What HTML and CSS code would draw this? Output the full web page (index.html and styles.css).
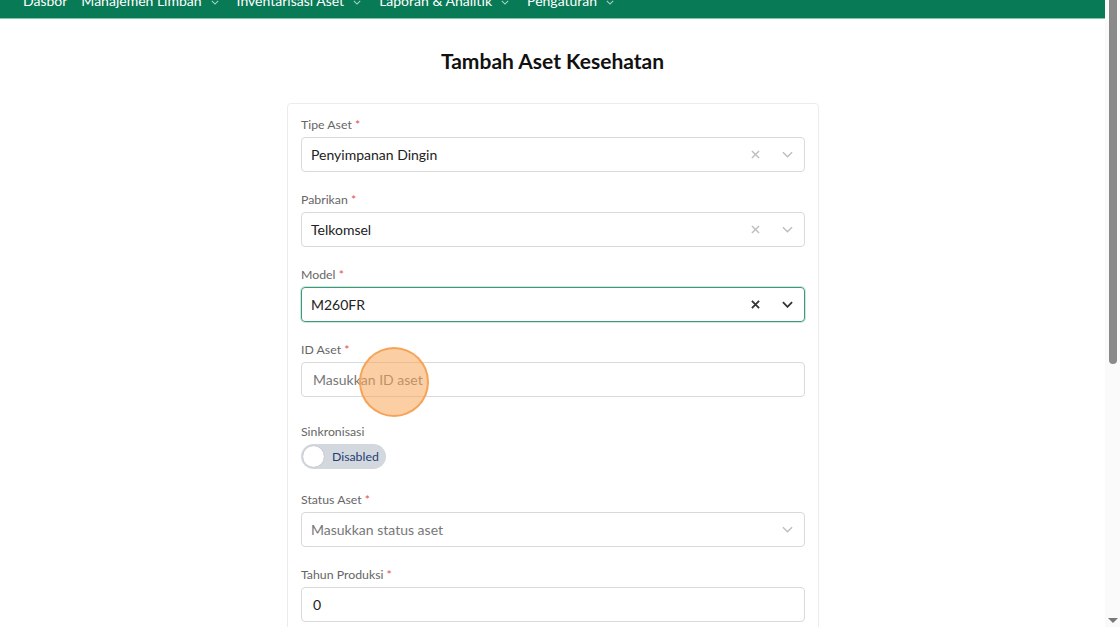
FILE: index.html
```html
<!DOCTYPE html>
<html>
<head>
    <title>Tambah Aset Kesehatan</title>
    <link rel="stylesheet" href="styles.css">
</head>
<body>
    <div class="page">
        <!-- top navigation (page is scrolled a little) -->
        <nav class="topnav">
            <span class="nav-item">Dasbor</span>
            <span class="nav-item">Manajemen Limbah <svg class="nav-caret" viewBox="0 0 10 6"><path d="M1 1l4 4 4-4" fill="none" stroke="currentColor" stroke-width="1.3"/></svg></span>
            <span class="nav-item">Inventarisasi Aset <svg class="nav-caret" viewBox="0 0 10 6"><path d="M1 1l4 4 4-4" fill="none" stroke="currentColor" stroke-width="1.3"/></svg></span>
            <span class="nav-item">Laporan &amp; Analitik <svg class="nav-caret" viewBox="0 0 10 6"><path d="M1 1l4 4 4-4" fill="none" stroke="currentColor" stroke-width="1.3"/></svg></span>
            <span class="nav-item">Pengaturan <svg class="nav-caret" viewBox="0 0 10 6"><path d="M1 1l4 4 4-4" fill="none" stroke="currentColor" stroke-width="1.3"/></svg></span>
        </nav>

        <h1 class="page-title">Tambah Aset Kesehatan</h1>

        <form class="card">
            <div class="field">
                <label class="field-label">Tipe Aset <span class="req">*</span></label>
                <div class="select">
                    <span class="select-value">Penyimpanan Dingin</span>
                    <svg class="icon-clear" viewBox="0 0 10 10"><path d="M1 1l8 8M9 1l-8 8" stroke="currentColor" stroke-width="1.5"/></svg>
                    <svg class="icon-chevron" viewBox="0 0 12 7"><path d="M1 1l5 5 5-5" fill="none" stroke="currentColor" stroke-width="1.5"/></svg>
                </div>
            </div>

            <div class="field">
                <label class="field-label">Pabrikan <span class="req">*</span></label>
                <div class="select">
                    <span class="select-value">Telkomsel</span>
                    <svg class="icon-clear" viewBox="0 0 10 10"><path d="M1 1l8 8M9 1l-8 8" stroke="currentColor" stroke-width="1.5"/></svg>
                    <svg class="icon-chevron" viewBox="0 0 12 7"><path d="M1 1l5 5 5-5" fill="none" stroke="currentColor" stroke-width="1.5"/></svg>
                </div>
            </div>

            <div class="field">
                <label class="field-label">Model <span class="req">*</span></label>
                <div class="select focused">
                    <span class="select-value">M260FR</span>
                    <svg class="icon-clear" viewBox="0 0 10 10"><path d="M1 1l8 8M9 1l-8 8" stroke="currentColor" stroke-width="2"/></svg>
                    <svg class="icon-chevron" viewBox="0 0 12 7"><path d="M1 1l5 5 5-5" fill="none" stroke="currentColor" stroke-width="2"/></svg>
                </div>
            </div>

            <div class="field">
                <label class="field-label">ID Aset <span class="req">*</span></label>
                <div class="input-wrap">
                    <input class="text-input" type="text" placeholder="Masukkan ID aset">
                    <span class="click-marker"></span>
                </div>
            </div>

            <div class="field field-toggle">
                <label class="field-label">Sinkronisasi</label>
                <div class="toggle">
                    <span class="toggle-knob"></span>
                    <span class="toggle-text">Disabled</span>
                </div>
            </div>

            <div class="field">
                <label class="field-label">Status Aset <span class="req">*</span></label>
                <div class="select">
                    <span class="select-value placeholder">Masukkan status aset</span>
                    <svg class="icon-chevron" viewBox="0 0 12 7"><path d="M1 1l5 5 5-5" fill="none" stroke="currentColor" stroke-width="1.5"/></svg>
                </div>
            </div>

            <div class="field">
                <label class="field-label">Tahun Produksi <span class="req">*</span></label>
                <input class="text-input" type="text" value="0">
            </div>
        </form>
    </div>

    <!-- fake scrollbar -->
    <div class="scrollbar">
        <div class="scroll-thumb"></div>
        <div class="scroll-arrow"></div>
    </div>
</body>
</html>
```

FILE: styles.css
```css
html, body {
    margin: 0;
    padding: 0;
    height: 100%;
    overflow: hidden;
}

body {
    font-family: Lato, "Open Sans", Arial, sans-serif;
    background-color: #fff;
    color: #222;
}

.page {
    width: 1105px;
}

.topnav {
    height: 18px;
    background-color: #087a55;
    border-bottom: 1px solid #7fc4ab;
    display: flex;
    align-items: flex-end;
    padding-left: 23px;
    overflow: hidden;
}

.nav-item {
    color: #fff;
    font-size: 14px;
    line-height: 14px;
    margin-right: 14px;
    display: flex;
    align-items: center;
    white-space: nowrap;
    margin-bottom: 10px;
}

.nav-item .nav-caret {
    margin-right: 4px;
}

.nav-caret {
    width: 8px;
    height: 5px;
    color: #a9d8c6;
    margin-left: 9px;
    margin-top: 2px;
}

.page-title {
    text-align: center;
    font-size: 21px;
    font-weight: bold;
    color: #111;
    margin: 29px 0 0;
    line-height: 26px;
}

.card {
    width: 504px;
    margin: 29px 0 0 287px;
    padding: 11px 13px 20px;
    border: 1px solid #ececec;
    border-radius: 4px;
}

.field {
    margin-bottom: 18px;
}

.field-label {
    display: block;
    font-size: 12.3px;
    line-height: 19px;
    color: #666;
    margin-bottom: 3px;
}

.req {
    color: #e0524f;
}

.select {
    height: 33px;
    border: 1px solid #d9d9d9;
    border-radius: 4px;
    display: flex;
    align-items: center;
    padding: 0 11px 0 9px;
}

.select.focused {
    border-color: #3d9a78;
    box-shadow: 0 0 0 1px #cde8dd;
}

.select-value {
    flex: 1;
    font-size: 14px;
    color: #222;
}

.select-value.placeholder {
    color: #777;
}

.icon-clear {
    width: 9px;
    height: 9px;
    color: #bdbdbd;
    margin-right: 22px;
}

.icon-chevron {
    width: 11px;
    height: 7px;
    color: #bdbdbd;
}

.focused .icon-clear,
.focused .icon-chevron {
    color: #333;
}

.input-wrap {
    position: relative;
}

.text-input {
    display: block;
    box-sizing: border-box;
    width: 100%;
    height: 35px;
    border: 1px solid #d9d9d9;
    border-radius: 4px;
    padding: 0 11px;
    font-family: inherit;
    font-size: 14px;
    color: #222;
    outline: none;
}

.text-input::placeholder {
    color: #777;
}

.click-marker {
    position: absolute;
    left: 58px;
    top: -15px;
    width: 66px;
    height: 66px;
    border-radius: 50%;
    background-color: rgba(250, 165, 90, 0.55);
    border: 2px solid rgba(245, 160, 80, 0.9);
}

.field-toggle {
    margin-top: 25px;
    margin-bottom: 21px;
}

.toggle {
    width: 85px;
    height: 25px;
    border-radius: 13px;
    background-color: #d3d8de;
    display: flex;
    align-items: center;
    box-sizing: border-box;
    padding: 0 2px;
}

.toggle-knob {
    width: 21px;
    height: 21px;
    border-radius: 50%;
    background-color: #fff;
    box-shadow: 0 0 1px rgba(0, 0, 0, 0.3);
}

.toggle-text {
    font-size: 12.3px;
    color: #1f3f73;
    margin-left: 8px;
}

.scrollbar {
    position: fixed;
    top: 0;
    right: 0;
    width: 15px;
    height: 100%;
    background-color: #fafafa;
}

.scroll-thumb {
    margin: 0 auto;
    width: 8px;
    height: 364px;
    background-color: #8a8a8a;
    border-radius: 0 0 4px 4px;
}

.scroll-arrow {
    position: absolute;
    bottom: 4px;
    left: 3px;
    width: 0;
    height: 0;
    border-left: 5px solid transparent;
    border-right: 5px solid transparent;
    border-top: 5px solid #777;
}
```
